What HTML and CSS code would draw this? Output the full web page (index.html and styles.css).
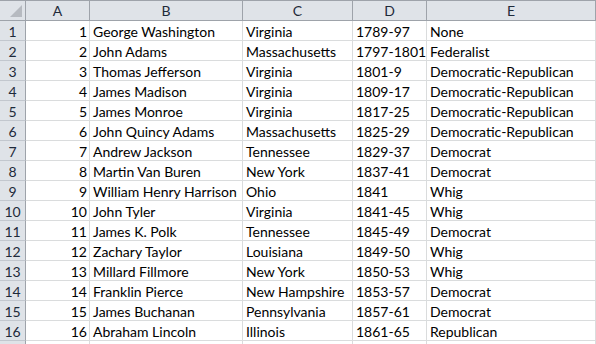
FILE: index.html
```html
<!DOCTYPE html>
<html lang="en">
  <head>
    <meta charset="UTF-8" />
    <title>Presidents</title>
    <link rel="stylesheet" href="styles.css">
  </head>
  <body>
    <div class="sheet" id="sheet">
      <div class="corner"><span class="tri"></span></div>
      <div class="col-head">A</div>
      <div class="col-head">B</div>
      <div class="col-head">C</div>
      <div class="col-head">D</div>
      <div class="col-head">E</div>
    </div>
    <script>
      const rows = [
        ["George Washington", "Virginia", "1789-97", "None"],
        ["John Adams", "Massachusetts", "1797-1801", "Federalist"],
        ["Thomas Jefferson", "Virginia", "1801-9", "Democratic-Republican"],
        ["James Madison", "Virginia", "1809-17", "Democratic-Republican"],
        ["James Monroe", "Virginia", "1817-25", "Democratic-Republican"],
        ["John Quincy Adams", "Massachusetts", "1825-29", "Democratic-Republican"],
        ["Andrew Jackson", "Tennessee", "1829-37", "Democrat"],
        ["Martin Van Buren", "New York", "1837-41", "Democrat"],
        ["William Henry Harrison", "Ohio", "1841", "Whig"],
        ["John Tyler", "Virginia", "1841-45", "Whig"],
        ["James K. Polk", "Tennessee", "1845-49", "Democrat"],
        ["Zachary Taylor", "Louisiana", "1849-50", "Whig"],
        ["Millard Fillmore", "New York", "1850-53", "Whig"],
        ["Franklin Pierce", "New Hampshire", "1853-57", "Democrat"],
        ["James Buchanan", "Pennsylvania", "1857-61", "Democrat"],
        ["Abraham Lincoln", "Illinois", "1861-65", "Republican"],
      ];
      const sheet = document.getElementById("sheet");

      function cell(cls, text) {
        const div = document.createElement("div");
        div.className = cls;
        div.textContent = text;
        sheet.appendChild(div);
      }

      rows.forEach((row, i) => {
        cell("row-head", i + 1);
        cell("cell num", i + 1);
        row.forEach((value) => cell("cell", value));
      });

      // empty row, only its top edge shows at the bottom
      cell("row-head", "");
      for (let i = 0; i < 5; i++) cell("cell", "");
    </script>
  </body>
</html>
```

FILE: styles.css
```css
body {
  margin: 0;
  background: #fff;
  overflow: hidden;
  font-family: "Lato", "Liberation Sans", sans-serif;
  font-size: 14px;
  color: #000;
}

.sheet {
  display: grid;
  grid-template-columns: 26px 64px 153px 110px 74px 169px;
  grid-template-rows: 21px;
  grid-auto-rows: 20px;
}

.sheet > div {
  box-sizing: border-box;
  white-space: nowrap;
  overflow: hidden;
}

.corner,
.col-head {
  background: #dfe3e8;
  border-top: 1px solid #9ea3aa;
  border-bottom: 1px solid #9ea3aa;
  border-right: 1px solid #9ea3aa;
}

.corner {
  position: relative;
}

.tri {
  position: absolute;
  right: 3px;
  bottom: 3px;
  width: 0;
  height: 0;
  border-left: 12px solid transparent;
  border-bottom: 12px solid #b6bac0;
}

.col-head {
  text-align: center;
  line-height: 19px;
  color: #1e2a3a;
}

.row-head {
  background: #dfe3e8;
  border-right: 1px solid #9ea3aa;
  border-bottom: 1px solid #c2c7ce;
  text-align: center;
  padding-top: 1px;
  line-height: 19px;
  color: #1e2a3a;
}

.cell {
  border-right: 1px solid #dadcdd;
  border-bottom: 1px solid #dadcdd;
  padding: 1px 2px 0 3px;
  line-height: 19px;
}

.num {
  text-align: right;
}
```
